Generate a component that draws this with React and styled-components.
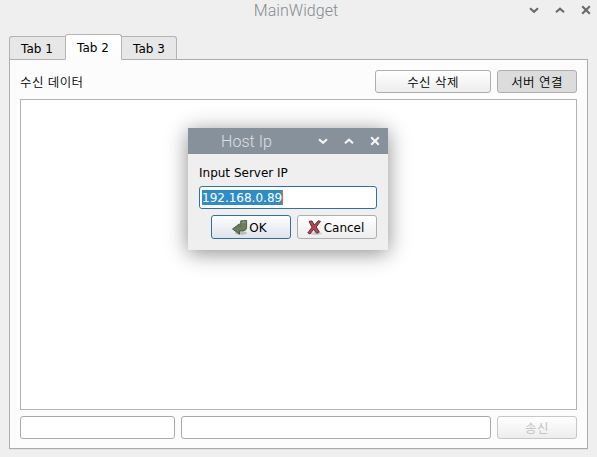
import React from "react";
import styled, { createGlobalStyle } from "styled-components";

const GlobalStyle = createGlobalStyle`
  * { box-sizing: border-box; }
  body { margin: 0; background: #efefef; overflow: hidden; }
  button, input, textarea { font: inherit; margin: 0; outline: none; }
`;

const Window = styled.main`
  position: relative;
  width: 597px;
  height: 457px;
  display: flex;
  flex-direction: column;
  background: #efefef;
  color: #000;
  font: 12px/14px "DejaVu Sans", "Noto Sans CJK KR", sans-serif;
`;

const TitleBar = styled.header`
  display: grid;
  grid-template-columns: ${(p) => (p.$dialog ? "117px" : "592px")} 1fr;
  grid-template-rows: 100%;
  height: ${(p) => (p.$dialog ? 26 : 34)}px;
  flex: none;
  color: ${(p) => (p.$dialog ? "#dce0e3" : "#858b91")};
  background: ${(p) => (p.$dialog ? "#87919b" : "#efefef")};
`;

const Title = styled.h1`
  grid-area: 1 / 1;
  margin: 0;
  text-align: center;
  font: 300 16px/20px Roboto, sans-serif;
  padding-top: ${(p) => (p.$dialog ? 4 : 1)}px;
  letter-spacing: 0.05px;
`;

const Controls = styled.div`
  grid-area: 1 / 1 / 2 / 3;
  justify-self: end;
  display: flex;
  gap: 16px;
  padding: ${(p) => (p.$dialog ? "8px 8px 0 0" : "5px 6px 0 0")};
  color: ${(p) => (p.$dialog ? "#f4f5f6" : "#68696a")};
  svg { display: block; }
`;

const Tabs = styled.nav`
  display: flex;
  align-items: flex-end;
  height: 26px;
  margin: 0 0 -1px 9px;
  z-index: 1;
`;

const Tab = styled.button`
  width: ${(p) => p.$width}px;
  height: ${(p) => (p.$active ? 26 : 24)}px;
  padding: ${(p) => (p.$after ? "1px 0 0" : "1px 1px 0 0")};
  border: 1px solid #b4b4b4;
  border-right-width: ${(p) => (p.$joined ? 0 : 1)}px;
  border-left-width: ${(p) => (p.$after ? 0 : 1)}px;
  border-bottom-color: ${(p) => (p.$active ? "#fcfcfc" : "#aeaeae")};
  border-radius: ${(p) => (p.$after ? "0 3px 0 0" : p.$joined ? "3px 0 0 0" : "3px 3px 0 0")};
  background: ${(p) => (p.$active ? "linear-gradient(#fff, #fcfcfc)" : "#e7e7e7")};
  color: #000;
`;

const Panel = styled.section`
  width: 579px;
  height: 390px;
  margin-left: 9px;
  padding: 10px 10px 9px;
  display: flex;
  flex-direction: column;
  gap: 6px;
  border: 1px solid #acacac;
  box-shadow: 0 1px #e2e2e2;
  background: #fcfcfc;
`;

const Row = styled.div`
  display: flex;
  gap: 6px;
  align-items: center;
  justify-content: flex-end;
`;

const Label = styled.label`
  margin-right: ${(p) => (p.$fill ? "auto" : 0)};
  white-space: nowrap;
`;

const Korean = styled.span`
  display: block;
  padding-top: ${(p) => (p.$label ? 1 : 0)}px;
  font-family: "Noto Sans CJK KR", sans-serif;
  font-weight: 350;
  font-size: 12.5px;
  letter-spacing: 0.4px;
  word-spacing: 0.8px;
`;

const Button = styled.button`
  display: flex;
  align-items: center;
  justify-content: center;
  gap: 1px;
  width: ${(p) => p.$width || 80}px;
  height: ${(p) => p.$height || 23}px;
  padding: ${(p) => (p.$icon ? "1px 3px 0 0" : "0")};
  white-space: nowrap;
  border: 1px solid ${(p) => (p.$primary ? "#2f7098" : p.disabled ? "#c7c7c7" : "#aeaeae")};
  border-radius: 3px;
  color: ${(p) => (p.disabled ? "#bebebe" : "#000")};
  background: ${(p) =>
    p.$pressed ? "#dcdcdc" : p.$primary ? "linear-gradient(#fdfdfe, #dee4eb)" : "linear-gradient(#fff, #ededed)"};
`;

const TextArea = styled.textarea`
  display: block;
  width: 557px;
  height: 311px;
  resize: none;
  border: 1px solid #b4b4b4;
  background: #fff;
`;

const Field = styled.input`
  width: ${(p) => p.$width}px;
  height: 23px;
  border: 1px solid #aaa;
  border-radius: 3px;
  background: #fff;
`;

const Dialog = styled.section`
  position: absolute;
  z-index: 2;
  left: 188px;
  top: 128px;
  width: 200px;
  height: 122px;
  background: #efefef;
  box-shadow: 0 3px 20px rgba(0, 0, 0, 0.45);
`;

const DialogBody = styled.div`
  display: flex;
  flex-direction: column;
  padding: 12px 11px 0;
`;

const IpField = styled.div`
  display: flex;
  align-items: center;
  height: 23px;
  margin: 6px 0;
  padding-left: 2px;
  border: 1px solid #2d73a0;
  border-radius: 3px;
  background: #fff;
`;

const Selection = styled.span`
  height: 15px;
  line-height: 16px;
  color: #fff;
  background: #308cc6;
  border-right: 1px solid #cf7339;
`;

const WindowControls = ({ dialog }) => (
  <Controls $dialog={dialog}>
    {["M1 3.2 5 6.8 9 3.2", "M1 7.2 5 3.6 9 7.2", "M1.2 1.2 8.8 8.8M8.8 1.2 1.2 8.8"].map((d) => (
      <svg key={d} width="10" height="10" fill="none" stroke="currentColor" strokeWidth="2.1">
        <path d={d} />
      </svg>
    ))}
  </Controls>
);

const OkIcon = () => (
  <svg width="16" height="16" viewBox="0 0 16 16">
    <ellipse cx="9" cy="13" rx="6" ry="1.8" fill="#8d9498" opacity=".5" />
    <path d="M8.7.9 14.6.4V7.5Q14.5 10.4 11.5 10.9H7.5V14.2L.5 9 7.3 3.9V6.4H8.7Z" fill="#6b8058" stroke="#465440" strokeWidth=".9" />
    <path d="M9.6 1.8 13.7 1.4V3H9.6Z" fill="#879975" />
  </svg>
);

const CancelIcon = () => (
  <svg width="16" height="16" viewBox="0 0 16 16">
    <ellipse cx="9" cy="13.5" rx="6" ry="1.4" fill="#aaa" opacity=".55" />
    <path d="M2 1.3 5 1 7.3 5 11.3.7 13.5 1.4 9.2 6.9 12.3 12.1 9.7 13.3 6.5 9.4 3 14 .8 12.9 5 7.3Z" fill="#b84450" stroke="#51292e" strokeWidth=".9" />
  </svg>
);

export default function App() {
  return (
    <Window>
      <GlobalStyle />
      <TitleBar>
        <Title>MainWidget</Title>
        <WindowControls />
      </TitleBar>
      <Tabs>
        <Tab $width={56} $joined>Tab 1</Tab>
        <Tab $width={57} $active>Tab 2</Tab>
        <Tab $width={55} $after>Tab 3</Tab>
      </Tabs>
      <Panel>
        <Row>
          <Label $fill><Korean $label>수신 데이터</Korean></Label>
          <Button $width={116}><Korean>수신 삭제</Korean></Button>
          <Button $pressed><Korean>서버 연결</Korean></Button>
        </Row>
        <TextArea readOnly />
        <Row>
          <Field $width={155} />
          <Field $width={310} />
          <Button disabled><Korean>송신</Korean></Button>
        </Row>
      </Panel>
      <Dialog>
        <TitleBar $dialog>
          <Title $dialog>Host Ip</Title>
          <WindowControls dialog />
        </TitleBar>
        <DialogBody>
          <Label>Input Server IP</Label>
          <IpField>
            <Selection>192.168.0.89</Selection>
          </IpField>
          <Row>
            <Button $primary $icon $height={24}><OkIcon />OK</Button>
            <Button $icon $height={24}><CancelIcon />Cancel</Button>
          </Row>
        </DialogBody>
      </Dialog>
    </Window>
  );
}
